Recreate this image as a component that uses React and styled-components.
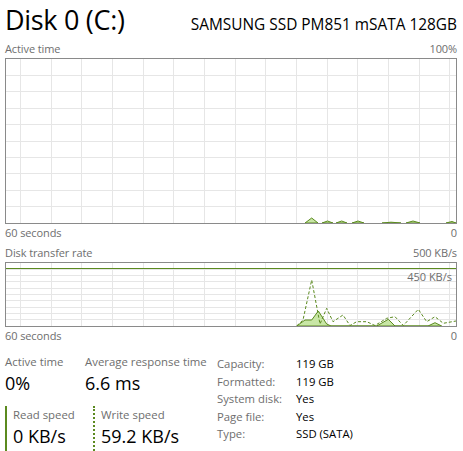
import React from 'react';
import styled, { createGlobalStyle } from 'styled-components';

const GlobalStyle = createGlobalStyle`
  html, body { margin: 0; padding: 0; background: #fff; }
  body { font-family: "Open Sans", "Noto Sans", sans-serif; color: #000; }
`;

const GREEN = '#5b8a1f';
const FILL = '#c8e6a5';
const GRID = '#e6e6e6';
const GREY = '#6e6e6e';

const Page = styled.div`
  width: 463px;
  height: 451px;
  box-sizing: border-box;
  padding: 0 6px 0 5px;
  overflow: hidden;
`;

const Header = styled.div`
  display: flex;
  justify-content: space-between;
  align-items: baseline;
  height: 41px;
`;

const Title = styled.h1`
  margin: 0;
  font-size: 27px;
  letter-spacing: -0.3px;
  font-weight: 400;
  line-height: 40px;
`;

const Model = styled.div`
  font-size: 15.4px;
`;

const ChartLabels = styled.div`
  display: flex;
  justify-content: space-between;
  font-size: 11px;
  letter-spacing: -0.1px;
  line-height: ${p => p.$lh || 15}px;
  color: ${GREY};
  margin-top: ${p => p.$mt || 0}px;
  margin-bottom: ${p => p.$mb || 0}px;
`;

const ChartBox = styled.div`
  position: relative;
  box-sizing: border-box;
  height: ${p => p.$h}px;
  border: 1px solid #8a8a8a;
  svg { display: block; }
`;

const ScaleTag = styled.span`
  position: absolute;
  right: 4px;
  top: 7px;
  font-size: 11px;
  color: ${GREY};
  line-height: 14px;
`;

const Stats = styled.div`
  display: flex;
  margin-top: 10px;
`;

const LeftStats = styled.div`
  width: 212px;
  display: flex;
  flex-direction: column;
`;

const StatRow = styled.div`
  display: flex;
`;

const Stat = styled.div`
  width: ${p => p.$w}px;
  box-sizing: border-box;
  padding-left: ${p => (p.$bar ? 6 : 0)}px;
  border-left: ${p =>
    p.$bar === 'solid' ? `2px solid ${GREEN}` : p.$bar === 'dotted' ? `2px dotted ${GREEN}` : 'none'};
`;

const StatLabel = styled.div`
  font-size: 11.4px;
  line-height: 17px;
  color: ${GREY};
  white-space: nowrap;
`;

const StatValue = styled.div`
  font-size: 18px;
  line-height: 22px;
  margin-top: 2px;
  white-space: nowrap;
`;

const SpeedRow = styled(StatRow)`
  margin-top: 12px;
  height: 60px;
`;

const InfoTable = styled.div`
  display: grid;
  grid-template-columns: 79px auto;
  grid-auto-rows: 17.5px;
  margin-top: 2px;
  font-size: 11.3px;
  line-height: 17px;
`;

const InfoKey = styled.div`
  color: ${GREY};
`;

const InfoVal = styled.div`
  color: #000;
`;

const W = 450;

function Grid({ h, rows }) {
  const lines = [];
  for (let k = 0; k < 15; k++) {
    const x = 14.5 + k * 30.66;
    lines.push(<line key={'v' + k} x1={x} x2={x} y1={0} y2={h} />);
  }
  for (let k = 1; k < rows; k++) {
    const y = (h / rows) * k;
    lines.push(<line key={'h' + k} x1={0} x2={W} y1={y} y2={y} />);
  }
  return (
    <g stroke={GRID} strokeWidth="1" shapeRendering="crispEdges">
      {lines}
    </g>
  );
}

const pts = a => a.map(p => p.join(',')).join(' ');

const activeBumps = [
  [[299, 164], [305.7, 159], [312, 164]],
  [[316, 164], [321.5, 162], [327, 164]],
  [[330, 164], [335.7, 162], [341, 164]],
  [[346, 164], [352, 162], [358, 164]],
  [[376, 164], [385, 163.2], [395, 164]],
  [[400, 164], [407, 162], [414, 164]],
  [[440, 164], [446, 162.5], [450, 164]],
];

const writeLine = [
  [290.7, 63], [297, 57], [305.7, 17], [314, 61], [320.7, 45.3], [327, 58.7],
  [337, 52], [344, 62.5], [350.7, 58.7], [360.7, 58.7], [369, 62.5], [380.7, 55.3],
  [389, 53.7], [397.3, 62.5], [412.3, 46.3], [420.7, 58.7], [429, 53.7], [437.3, 60.3], [450, 58],
];

const readArea = [
  [290.7, 63], [299, 57], [305.7, 57], [312.3, 48], [320.7, 61], [325, 63],
  [370.7, 63], [382.3, 56.3], [389, 63], [422, 63], [429, 59.7], [435.7, 63],
];

function ActiveChart() {
  const h = 164;
  return (
    <ChartBox $h={166}>
      <svg width={W} height={h}>
        <Grid h={h} rows={10} />
        {activeBumps.map((b, i) => (
          <polygon key={i} points={pts(b)} fill={FILL} stroke={GREEN} strokeWidth="1" />
        ))}
      </svg>
    </ChartBox>
  );
}

function TransferChart() {
  const h = 63;
  return (
    <ChartBox $h={65}>
      <svg width={W} height={h}>
        <Grid h={h} rows={10} />
        <line x1={0} x2={W} y1={5.5} y2={5.5} stroke={GREEN} strokeWidth="1" />
        <polygon points={pts(readArea)} fill={FILL} stroke={GREEN} strokeWidth="1" />
        <polyline points={pts(writeLine)} fill="none" stroke={GREEN} strokeWidth="1" strokeDasharray="3 2" />
      </svg>
      <ScaleTag>450 KB/s</ScaleTag>
    </ChartBox>
  );
}

export default function App() {
  return (
    <Page>
      <GlobalStyle />
      <Header>
        <Title>Disk 0 (C:)</Title>
        <Model>SAMSUNG SSD PM851 mSATA 128GB</Model>
      </Header>

      <ChartLabels $mb={2}>
        <span>Active time</span>
        <span>100%</span>
      </ChartLabels>
      <ActiveChart />
      <ChartLabels $lh={14} $mt={2} $mb={5}>
        <span>60 seconds</span>
        <span>0</span>
      </ChartLabels>

      <ChartLabels $mb={2}>
        <span>Disk transfer rate</span>
        <span>500 KB/s</span>
      </ChartLabels>
      <TransferChart />
      <ChartLabels $lh={14} $mt={2}>
        <span>60 seconds</span>
        <span>0</span>
      </ChartLabels>

      <Stats>
        <LeftStats>
          <StatRow>
            <Stat $w={80}>
              <StatLabel>Active time</StatLabel>
              <StatValue>0%</StatValue>
            </Stat>
            <Stat $w={132}>
              <StatLabel>Average response time</StatLabel>
              <StatValue>6.6 ms</StatValue>
            </Stat>
          </StatRow>
          <SpeedRow>
            <Stat $w={88} $bar="solid">
              <StatLabel>Read speed</StatLabel>
              <StatValue>0 KB/s</StatValue>
            </Stat>
            <Stat $w={110} $bar="dotted">
              <StatLabel>Write speed</StatLabel>
              <StatValue>59.2 KB/s</StatValue>
            </Stat>
          </SpeedRow>
        </LeftStats>
        <InfoTable>
          <InfoKey>Capacity:</InfoKey>
          <InfoVal>119 GB</InfoVal>
          <InfoKey>Formatted:</InfoKey>
          <InfoVal>119 GB</InfoVal>
          <InfoKey>System disk:</InfoKey>
          <InfoVal>Yes</InfoVal>
          <InfoKey>Page file:</InfoKey>
          <InfoVal>Yes</InfoVal>
          <InfoKey>Type:</InfoKey>
          <InfoVal>SSD (SATA)</InfoVal>
        </InfoTable>
      </Stats>
    </Page>
  );
}
